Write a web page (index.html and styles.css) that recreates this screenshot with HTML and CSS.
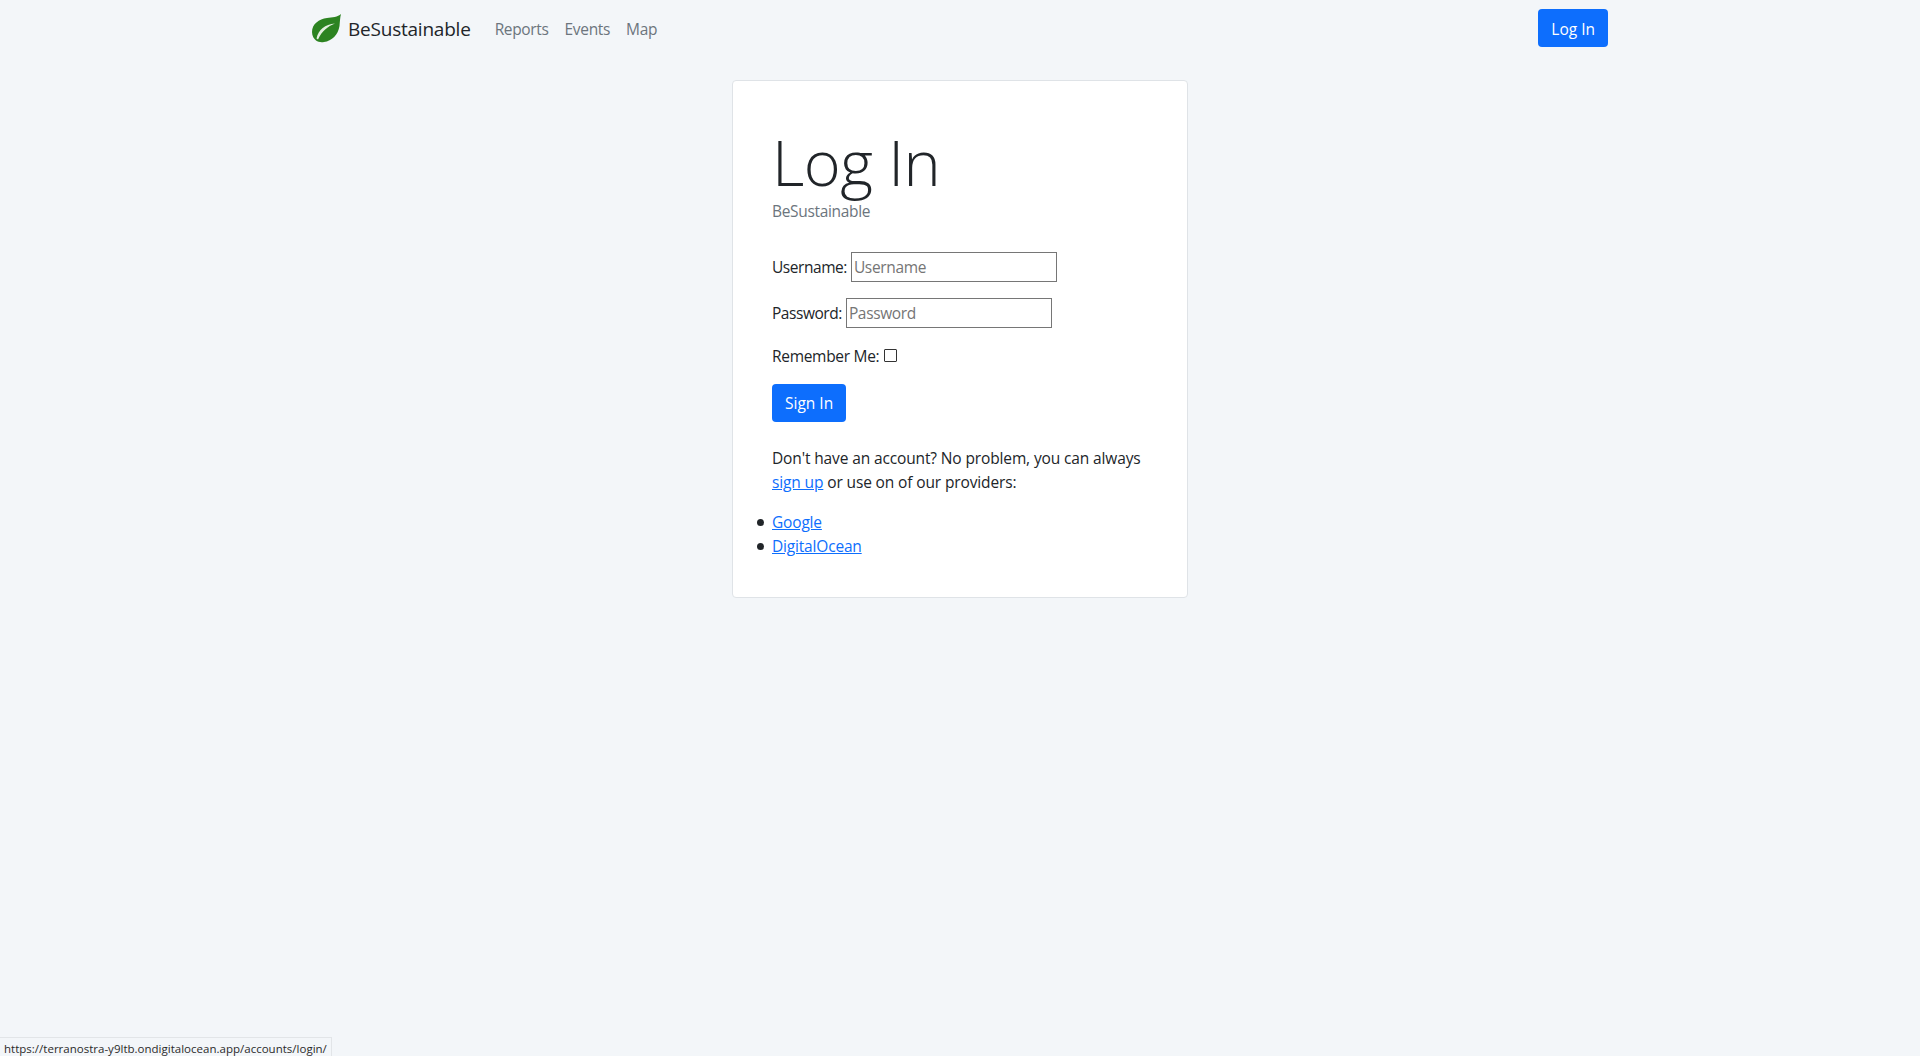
FILE: index.html
```html
<!DOCTYPE html>
<html lang="en">
<head>
<meta charset="utf-8">
<title>Log In - BeSustainable</title>
<link rel="stylesheet" href="styles.css">
</head>
<body>
<nav class="navbar">
  <div class="nav-inner">
    <a class="brand" href="#">
      <svg class="leaf" viewBox="0 0 30 30" aria-hidden="true">
        <path class="leaf-body" d="M29 1C26 4 20 4.5 15 5C7 6 0 11 0 19C0 23 2 26 4 27.5C6 29 9 29.5 12 29C20 28 26 22 27.5 13C28 8 28 5 29 1Z"/>
        <path class="leaf-vein" d="M4.5 25.5C6.5 16.5 13 11.5 23 10.5C15.5 13.5 10 18 6 26.5Z"/>
      </svg>
      <span class="brand-name">BeSustainable</span>
    </a>
    <ul class="nav-links">
      <li><a href="#">Reports</a></li>
      <li><a href="#">Events</a></li>
      <li><a href="#">Map</a></li>
    </ul>
    <a class="btn nav-btn" href="#">Log In</a>
  </div>
</nav>
<main class="page">
  <section class="card">
    <h1 class="title">Log In</h1>
    <p class="subtitle">BeSustainable</p>
    <form class="form">
      <p class="field"><label for="u">Username:</label> <input id="u" type="text" placeholder="Username"></p>
      <p class="field"><label for="p">Password:</label> <input id="p" type="password" placeholder="Password"></p>
      <p class="field check"><label for="r">Remember Me:</label> <input id="r" type="checkbox"></p>
      <button class="btn" type="button">Sign In</button>
    </form>
    <p class="signup">Don't have an account? No problem, you can always <a href="#">sign up</a> or use on of our providers:</p>
    <ul class="providers">
      <li><a href="#">Google</a></li>
      <li><a href="#">DigitalOcean</a></li>
    </ul>
  </section>
</main>
<div class="status">https://terranostra-y9ltb.ondigitalocean.app/accounts/login/</div>
</body>
</html>
```
FILE: styles.css
```css
* { box-sizing: border-box; }
html, body { margin: 0; height: 100%; }
body {
  background: #f3f6f9;
  color: #212529;
  font-family: "Open Sans", "Liberation Sans", sans-serif;
  font-size: 15.5px;
  line-height: 24px;
  letter-spacing: -0.22px;
  overflow: hidden;
}
a { color: #0d6efd; }
.navbar { height: 56px; padding-top: 9px; }
.nav-inner {
  width: 1320px;
  margin: 0 auto;
  padding: 0 12px;
  display: flex;
  align-items: flex-start;
}
.brand {
  display: flex;
  align-items: center;
  gap: 6px;
  height: 38px;
  color: #212529;
  text-decoration: none;
  font-size: 19px;
  margin-right: 24px;
}
.brand-name { padding-top: 2px; }
.leaf { width: 30px; height: 30px; display: block; }
.leaf-body { fill: #2c8321; }
.leaf-vein { fill: #e4efe0; }
.nav-links {
  display: flex;
  gap: 16px;
  list-style: none;
  margin: 0;
  padding: 0;
  flex: 1;
  line-height: 40px;
  letter-spacing: -0.34px;
}
.nav-links a { color: #6c757d; text-decoration: none; }
.btn {
  display: inline-block;
  height: 38px;
  padding: 0 13px;
  background: #0d6efd;
  color: #fff;
  border: 0;
  border-radius: 4px;
  font: inherit;
  letter-spacing: 0;
  line-height: 39px;
  text-decoration: none;
}
.nav-btn { line-height: 40px; }
.page { display: flex; justify-content: center; padding-top: 24px; }
.card {
  width: 456px;
  height: 518px;
  background: #fff;
  border: 1px solid #dfe3e7;
  border-radius: 4px;
  padding: 39px;
}
.title {
  margin: 6px 0 1px;
  font-size: 63px;
  font-weight: 300;
  line-height: 72px;
  letter-spacing: -0.55px;
}
.subtitle { margin: 0 0 29px; color: #6c757d; letter-spacing: -0.32px; }
.field { margin: 0 0 16px; display: flex; align-items: center; gap: 4px; height: 30px; }
.field label { letter-spacing: -0.45px; }
.field input[type="text"], .field input[type="password"] {
  width: 206px;
  height: 30px;
  border: 1.5px solid #767676;
  border-radius: 0;
  padding: 1px 2px;
  font: inherit;
  letter-spacing: -0.35px;
  color: #212529;
  background: #fff;
}
.field input::placeholder { color: #757575; opacity: 1; }
.check { height: 24px; margin-bottom: 16px; }
.check label { letter-spacing: -0.3px; }
.check input {
  appearance: none;
  width: 13px;
  height: 13px;
  margin: -1px 0 0 1px;
  background: #fff;
  border: 1px solid #333;
  border-radius: 1px;
}
.signup { margin: 24px 0 16px; letter-spacing: -0.13px; }
.providers { margin: 0; padding: 0; list-style: none; letter-spacing: -0.18px; }
.providers li { position: relative; }
.providers li::before {
  content: "";
  position: absolute;
  left: -15px;
  top: 9px;
  width: 7px;
  height: 7px;
  border-radius: 50%;
  background: #212529;
}
.status {
  position: fixed;
  left: 0;
  bottom: 0;
  height: 19px;
  padding: 0 4px;
  background: #f3f6f9;
  border: 1px solid #e2e5e8;
  border-left: 0;
  border-bottom: 0;
  font-size: 11.5px;
  line-height: 22px;
  letter-spacing: 0.01px;
  color: #2b2b2b;
  white-space: nowrap;
  overflow: hidden;
}
```
